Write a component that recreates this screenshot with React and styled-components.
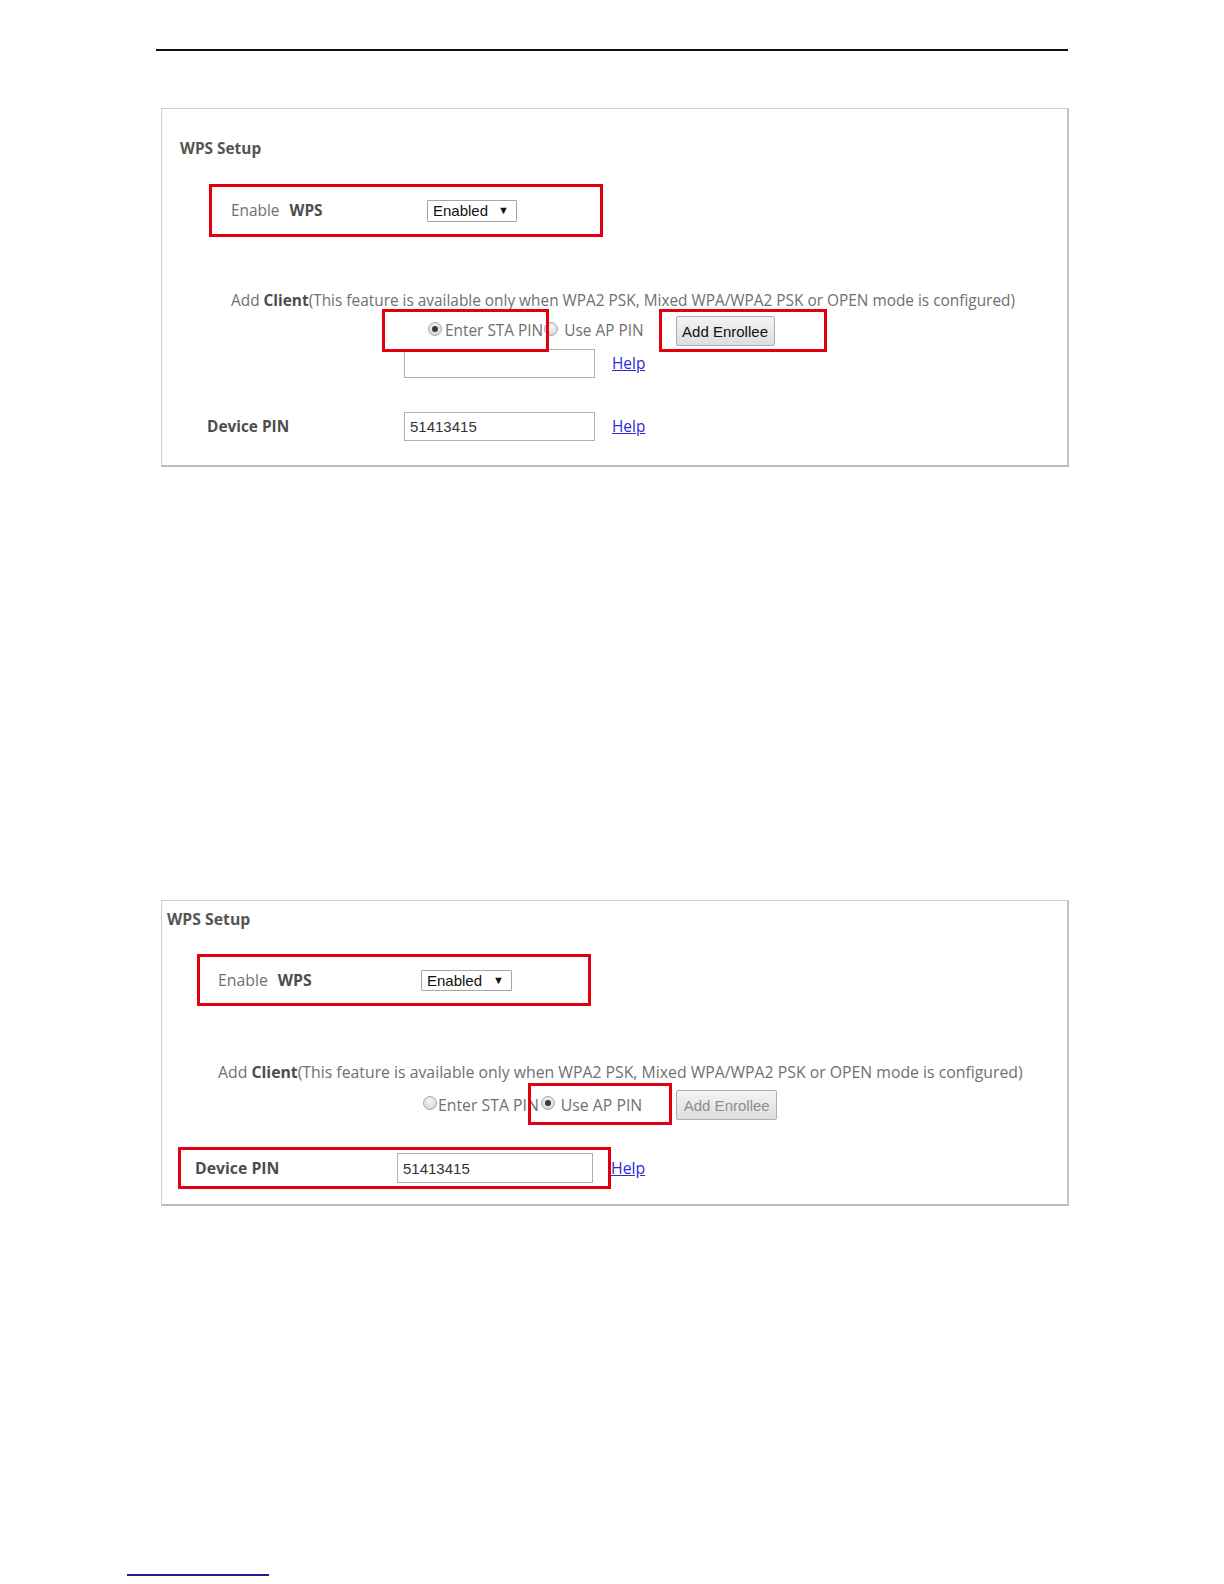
import React from "react";
import styled, { createGlobalStyle } from "styled-components";

const Global = createGlobalStyle`
  html, body { margin: 0; padding: 0; background: #fff; }
  body { font-family: "Open Sans", "Noto Sans", "DejaVu Sans", sans-serif; }
`;

const Page = styled.div`
  width: 1224px;
  min-height: 1584px;
  box-sizing: border-box;
  padding-top: 49px;
  display: flex;
  flex-direction: column;
`;

const TopRule = styled.div`
  margin-left: 156px;
  width: 912px;
  height: 2px;
  background: #111;
`;

const Panel = styled.section`
  margin-left: 161px;
  margin-top: ${(p) => p.$top}px;
  width: 908px;
  box-sizing: border-box;
  border: 1px solid #cfcfcf;
  border-bottom: 2px solid #bdbdbd;
  border-right: 2px solid #c4c4c4;
  padding: ${(p) => p.$pad};
  display: flex;
  flex-direction: column;
  align-items: flex-start;
  font-size: ${(p) => p.$fs}px;
`;

const Title = styled.h2`
  margin: 0 0 0 ${(p) => p.$indent}px;
  font-size: ${(p) => p.$size}px;
  line-height: 20px;
  font-weight: 700;
  color: #555;
`;

const Annot = styled.div`
  box-sizing: border-box;
  border: 3px solid #e2000e;
`;

const EnableBox = styled(Annot)`
  display: flex;
  align-items: center;
  width: 394px;
  height: ${(p) => p.$h}px;
  margin-left: ${(p) => p.$left}px;
  margin-top: 25px;
  padding-left: ${(p) => p.$padLeft}px;
`;

const LabelCell = styled.div`
  width: ${(p) => p.$w}px;
  flex: none;
  display: flex;
  align-items: center;
  line-height: 20px;
`;

const Plain = styled.span`
  color: #707070;
  font-weight: 400;
`;

const Strong = styled.span`
  color: #4d4d4d;
  font-weight: 700;
  margin-left: ${(p) => p.$ml || 0}px;
`;

const SelectBox = styled.div`
  width: ${(p) => p.$w}px;
  height: ${(p) => p.$h}px;
  box-sizing: border-box;
  border: 1px solid #a6a6a6;
  border-radius: 1px;
  background: #fff;
  display: flex;
  align-items: center;
  justify-content: space-between;
  padding: 0 7px 0 5px;
  font-family: "Liberation Sans", Arial, sans-serif;
  font-size: 15px;
  color: #111;
`;

const Arrow = styled.span`
  font-size: 11px;
  line-height: 1;
  color: #111;
`;

const Note = styled.p`
  margin: ${(p) => p.$top}px 0 0 ${(p) => p.$left}px;
  line-height: 20px;
  color: #707070;
  white-space: nowrap;
`;

const RadioRow = styled.div`
  position: relative;
  display: flex;
  align-items: center;
  height: 30px;
  margin-top: ${(p) => p.$top}px;
  padding-left: ${(p) => p.$left}px;
`;

const Radio = styled.span`
  width: 14px;
  height: 14px;
  flex: none;
  box-sizing: border-box;
  border-radius: 50%;
  border: 1px solid #a8a8a8;
  background: radial-gradient(circle at 50% 35%, #f7f7f7 0%, #dcdcdc 65%, #c8c8c8 100%);
  margin-left: ${(p) => p.$ml || 0}px;
  margin-bottom: 4px;
  display: flex;
  align-items: center;
  justify-content: center;
  &::after {
    content: "";
    width: 6px;
    height: 6px;
    border-radius: 50%;
    background: ${(p) => (p.$checked ? "#3a3a3a" : "transparent")};
  }
`;

const RadioText = styled.span`
  margin-left: ${(p) => p.$ml}px;
  color: #707070;
  line-height: 20px;
  white-space: nowrap;
`;

const Button = styled.button`
  margin-left: ${(p) => p.$ml}px;
  width: ${(p) => p.$w}px;
  height: 30px;
  box-sizing: border-box;
  border: 1px solid #adadad;
  border-radius: 2px;
  background: linear-gradient(#f4f4f4, #dedede);
  font-family: "Liberation Sans", Arial, sans-serif;
  font-size: 15px;
  color: ${(p) => (p.disabled ? "#8d8d8d" : "#111")};
  padding: 0;
  cursor: default;
`;

const Overlay = styled(Annot)`
  position: absolute;
  left: ${(p) => p.$x}px;
  top: ${(p) => p.$y}px;
  width: ${(p) => p.$w}px;
  height: ${(p) => p.$h}px;
  pointer-events: none;
`;

const FieldRow = styled.div`
  display: flex;
  align-items: center;
  margin-top: ${(p) => p.$top}px;
  padding-left: ${(p) => p.$left}px;
`;

const PinBox = styled(Annot)`
  display: flex;
  align-items: center;
  width: 433px;
  height: 42px;
  padding-left: 14px;
`;

const TextInput = styled.input`
  width: ${(p) => p.$w}px;
  height: ${(p) => p.$h}px;
  box-sizing: border-box;
  border: 1px solid #b0b0b0;
  border-radius: 0;
  padding: 0 5px;
  font-family: "Liberation Sans", Arial, sans-serif;
  font-size: 15px;
  color: #333;
  background: #fff;
  outline: none;
`;

const Help = styled.a`
  margin-left: ${(p) => p.$ml}px;
  color: #2a2ad6;
  text-decoration: underline;
  line-height: 20px;
`;

const Footnote = styled.div`
  margin-top: 368px;
  margin-left: 127px;
  width: 142px;
  height: 2px;
  background: #1f1f8f;
`;

export default function App() {
  return (
    <>
      <Global />
      <Page>
        <TopRule />

        <Panel $top={57} $pad="30px 0 24px 0" $fs={15.4}>
          <Title $indent={18} $size={15.4}>WPS Setup</Title>
          <EnableBox $left={47} $h={53} $padLeft={19}>
            <LabelCell $w={196}>
              <Plain>Enable</Plain>
              <Strong $ml={10}>WPS</Strong>
            </LabelCell>
            <SelectBox $w={90} $h={22}>
              Enabled <Arrow>▼</Arrow>
            </SelectBox>
          </EnableBox>
          <Note $top={54} $left={69}>
            <Plain>Add </Plain>
            <Strong>Client</Strong>
            <Plain>(This feature is available only when WPA2 PSK, Mixed WPA/WPA2 PSK or OPEN mode is configured)</Plain>
          </Note>
          <RadioRow $top={5} $left={266}>
            <Radio $checked />
            <RadioText $ml={3}>Enter STA PIN</RadioText>
            <Radio $ml={1} />
            <RadioText $ml={6}>Use AP PIN</RadioText>
            <Button $ml={32} $w={99}>Add Enrollee</Button>
            <Overlay $x={220} $y={-7} $w={167} $h={43} />
            <Overlay $x={497} $y={-7} $w={168} $h={43} />
          </RadioRow>
          <FieldRow $top={3} $left={242}>
            <TextInput $w={191} $h={29} defaultValue="" />
            <Help href="#" $ml={17}>Help</Help>
          </FieldRow>
          <FieldRow $top={34} $left={45}>
            <LabelCell $w={197}>
              <Strong>Device PIN</Strong>
            </LabelCell>
            <TextInput $w={191} $h={29} defaultValue="51413415" />
            <Help href="#" $ml={17}>Help</Help>
          </FieldRow>
        </Panel>

        <Panel $top={433} $pad="8px 0 15px 0" $fs={15.8}>
          <Title $indent={5} $size={15.8}>WPS Setup</Title>
          <EnableBox $left={35} $h={52} $padLeft={18}>
            <LabelCell $w={203}>
              <Plain>Enable</Plain>
              <Strong $ml={10}>WPS</Strong>
            </LabelCell>
            <SelectBox $w={91} $h={21}>
              Enabled <Arrow>▼</Arrow>
            </SelectBox>
          </EnableBox>
          <Note $top={56} $left={56}>
            <Plain>Add </Plain>
            <Strong>Client</Strong>
            <Plain>(This feature is available only when WPA2 PSK, Mixed WPA/WPA2 PSK or OPEN mode is configured)</Plain>
          </Note>
          <RadioRow $top={8} $left={261}>
            <Radio />
            <RadioText $ml={1}>Enter STA PIN</RadioText>
            <Radio $ml={2} $checked />
            <RadioText $ml={6}>Use AP PIN</RadioText>
            <Button $ml={34} $w={101} disabled>Add Enrollee</Button>
            <Overlay $x={366} $y={-7} $w={144} $h={42} />
          </RadioRow>
          <FieldRow $top={27} $left={16}>
            <PinBox>
              <LabelCell $w={202}>
                <Strong>Device PIN</Strong>
              </LabelCell>
              <TextInput $w={196} $h={30} defaultValue="51413415" />
            </PinBox>
            <Help href="#" $ml={0}>Help</Help>
          </FieldRow>
        </Panel>

        <Footnote />
      </Page>
    </>
  );
}
